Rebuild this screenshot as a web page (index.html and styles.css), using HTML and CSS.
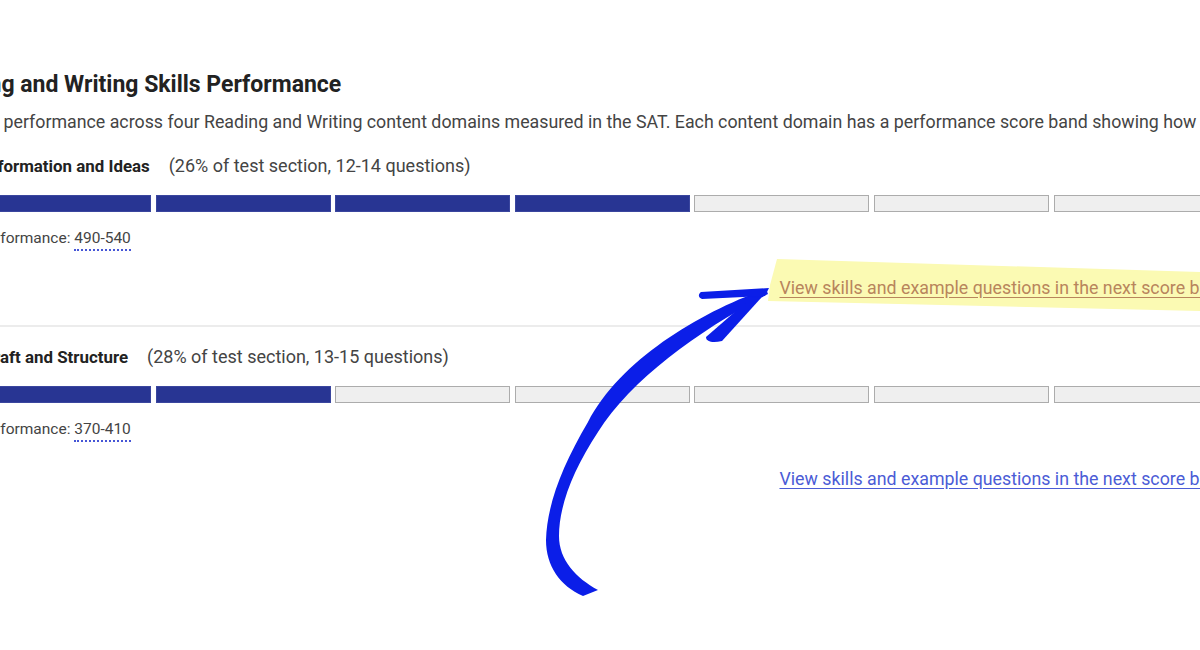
FILE: index.html
```html
<!DOCTYPE html>
<html lang="en">
<head>
    <meta charset="UTF-8">
    <meta name="viewport" content="width=device-width, initial-scale=1.0">
    <title>Reading and Writing Skills Performance</title>
    <link rel="stylesheet" href="styles.css">
</head>
<body>
    <svg class="marks marks-under" width="1200" height="650" viewBox="0 0 1200 650">
        <polygon class="highlight" points="777,259 1200,272 1200,311 768,301 770,285"></polygon>
    </svg>

    <main class="report">
        <h2 class="report-title">Reading and Writing Skills Performance</h2>
        <p class="report-intro">View your performance across four Reading and Writing content domains measured in the SAT. Each content domain has a performance score band showing how you performed.</p>

        <section class="domain">
            <div class="domain-head">
                <span class="domain-name">Information and Ideas</span>
                <span class="domain-share">(26% of test section, 12-14 questions)</span>
            </div>
            <div class="band">
                <div class="seg filled"></div>
                <div class="seg filled"></div>
                <div class="seg filled"></div>
                <div class="seg filled"></div>
                <div class="seg"></div>
                <div class="seg"></div>
                <div class="seg"></div>
            </div>
            <p class="domain-score">Performance: <span class="score-range">490-540</span></p>
            <div class="next-band">
                <a href="#" class="next-link marked">View skills and example questions in the next score band</a>
            </div>
        </section>

        <section class="domain">
            <div class="domain-head">
                <span class="domain-name">Craft and Structure</span>
                <span class="domain-share">(28% of test section, 13-15 questions)</span>
            </div>
            <div class="band">
                <div class="seg filled"></div>
                <div class="seg filled"></div>
                <div class="seg"></div>
                <div class="seg"></div>
                <div class="seg"></div>
                <div class="seg"></div>
                <div class="seg"></div>
            </div>
            <p class="domain-score">Performance: <span class="score-range">370-410</span></p>
            <div class="next-band">
                <a href="#" class="next-link">View skills and example questions in the next score band</a>
            </div>
        </section>
    </main>

    <!-- hand drawn arrow pointing at the first link -->
    <svg class="marks marks-over" width="1200" height="650" viewBox="0 0 1200 650">
        <path class="arrow" d="M 766 289 C 700 312, 620 360, 588 422 C 562 466, 547 505, 546 540 C 546 566, 560 586, 583 596 L 598 590 C 576 578, 559 560, 559 536 C 559 506, 573 470, 598 432 C 632 378, 700 330, 768 294 Z"></path>
        <path class="arrow" d="M 769 288 L 701 292 C 698 294, 698 298, 702 299 L 765 296 Z"></path>
        <path class="arrow" d="M 752 297 L 706 337 C 706 342, 713 343, 722 341 L 761 298 Z"></path>
    </svg>
</body>
</html>
```

FILE: styles.css
```css
body {
    margin: 0;
    background: #fff;
    color: #333;
    font-family: 'Roboto', 'Liberation Sans', sans-serif;
    overflow: hidden;
    width: 1200px;
    height: 650px;
    position: relative;
}

.marks {
    position: absolute;
    left: 0;
    top: 0;
    pointer-events: none;
}

.marks-under {
    z-index: 0;
}

.marks-over {
    z-index: 2;
}

.highlight {
    fill: #fbfab3;
}

.arrow {
    fill: #0b1ee8;
}

.report {
    position: relative;
    z-index: 1;
    margin-left: -80px;
    padding-top: 70px;
    width: 1400px;
}

.report-title {
    margin: 0 0 10px 10px;
    font-size: 23px;
    line-height: 30px;
    font-weight: 700;
    color: #222;
}

.report-intro {
    margin: 0 0 20px 2px;
    font-size: 17.8px;
    line-height: 24px;
    color: #444;
    white-space: nowrap;
}

.domain {
    margin-left: 56px;
    width: 1253px;
}

.domain + .domain {
    border-top: 2px solid #ececec;
    padding-top: 18px;
}

.domain-head {
    padding-left: 7px;
    margin-bottom: 16px;
    line-height: 24px;
    white-space: nowrap;
}

.domain-name {
    font-size: 16.9px;
    font-weight: 700;
    color: #222;
    margin-right: 15px;
}

.domain-share {
    font-size: 18px;
    color: #444;
}

.band {
    display: grid;
    grid-template-columns: repeat(7, 175px);
    column-gap: 4.6px;
    height: 17px;
    margin-bottom: 15px;
}

.seg {
    box-sizing: border-box;
    background: #efefef;
    border: 1px solid #acacac;
}

.seg.filled {
    background: #283593;
    border-color: #3a469e;
}

.domain-score {
    margin: 0 0 27px 1px;
    font-size: 15.5px;
    line-height: 22px;
    color: #444;
}

.score-range {
    border-bottom: 2px dotted #4656d6;
    padding-bottom: 2px;
}

.next-band {
    text-align: right;
    font-size: 17.8px;
    line-height: 24px;
    padding-bottom: 25px;
    white-space: nowrap;
}

.next-link {
    color: #4b5cd6;
    text-underline-offset: 3px;
}

.next-link.marked {
    color: #b8855c;
}
```
